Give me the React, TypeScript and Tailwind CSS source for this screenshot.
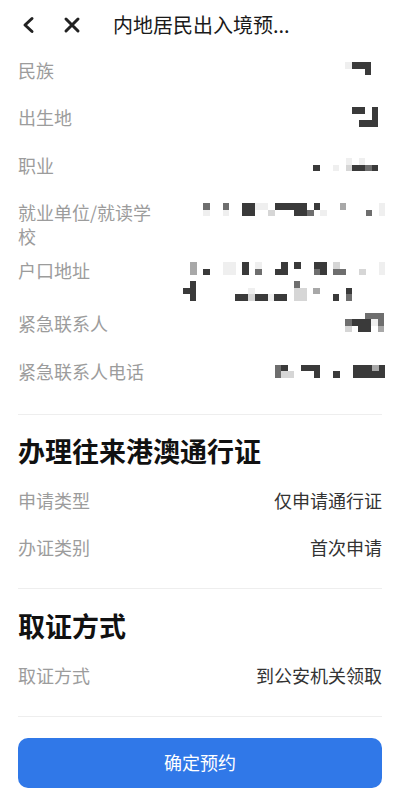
import React from "react";

const shade: Record<string, string> = {
  " ": "bg-transparent",
  "1": "bg-[#efefef]",
  "2": "bg-[#d6d6d6]",
  "3": "bg-[#a8a8a8]",
  "4": "bg-[#6e6e6e]",
  "5": "bg-[#3a3a3a]",
};

function Mosaic({ rows, className = "" }: { rows: string[]; className?: string }) {
  return (
    <div className={`flex flex-col shrink-0 ${className}`}>
      {rows.map((r, i) => (
        <div key={i} className="flex">
          {[...r].map((c, j) => (
            <div key={j} className={`w-[6.5px] h-[6.5px] ${shade[c]}`} />
          ))}
        </div>
      ))}
    </div>
  );
}

function Row({
  label,
  className = "",
  children,
}: {
  label: string;
  className?: string;
  children?: React.ReactNode;
}) {
  return (
    <div className={`flex justify-between items-start ${className}`}>
      <div className="w-[140px] text-[18px] leading-[24px] text-[#9c9c9c]">{label}</div>
      {children}
    </div>
  );
}

export default function App() {
  return (
    <div
      className="w-[400px] h-[808px] bg-white overflow-hidden"
      style={{ fontFamily: '"Noto Sans CJK SC", "Noto Sans", sans-serif' }}
    >
      {/* Header */}
      <div className="h-[50px] flex items-center">
        <svg className="ml-[21px]" width="14" height="18" viewBox="0 0 14 18" fill="none">
          <path d="M11 2.5 L4 9 L11 15.5" stroke="#222222" strokeWidth="3" strokeLinecap="round" strokeLinejoin="round" />
        </svg>
        <svg className="ml-[28px]" width="18" height="18" viewBox="0 0 18 18" fill="none">
          <path d="M3 3 L15 15 M15 3 L3 15" stroke="#222222" strokeWidth="3" strokeLinecap="round" />
        </svg>
        <div className="ml-[32px] text-[20px] leading-[26px] text-[#1a1a1a]">内地居民出入境预...</div>
      </div>

      <div className="px-[18px] flex flex-col">
        <Row label="民族" className="mt-[8px]">
          <Mosaic className="mt-[4px] mr-[11px]" rows={["1555", "   5"]} />
        </Row>
        <Row label="出生地" className="mt-[23px]">
          <Mosaic className="mt-[2px] mr-[4px]" rows={["55 5", "   5", " 555"]} />
        </Row>
        <Row label="职业" className="mt-[24px]">
          <Mosaic className="mt-[5px] mr-[4px]" rows={["     1 1  ", "5  1 25545"]} />
        </Row>
        <Row label="就业单位/就读学校" className="mt-[23px]">
          <Mosaic
            className="mt-[3px] -mr-[3px]"
            rows={["4  4  5511 55555 5   3     1", "1  1  55  2   554 1      4 1"]}
          />
        </Row>
        <Row label="户口地址" className="mt-[10px]">
          <div className="flex flex-col items-end mt-[4px]">
            <Mosaic
              className="-mr-[3px]"
              rows={["3    11 5 1   5 5  55 2      1", "3 5  11 5 4  55    45 44  2  1"]}
            />
            <Mosaic
              className="mt-[6px] mr-[30px]"
              rows={[
                " 5               4        ",
                "55        1      22 3    5",
                " 5      55255155 22    5 4",
              ]}
            />
          </div>
        </Row>
        <Row label="紧急联系人" className="mt-[10px]">
          <Mosaic className="mt-[2px] -mr-[2px]" rows={["   444", "455514", "2 55 3"]} />
        </Row>
        <Row label="紧急联系人电话" className="mt-[24px]">
          <Mosaic className="mt-[6px] -mr-[3px]" rows={["45  555     55535", "422   5  5  55555"]} />
        </Row>

        <div className="mt-[31px] h-px bg-[#eeeeee]" />

        <div className="mt-[19px] text-[27px] leading-[34px] font-bold text-[#111111]">办理往来港澳通行证</div>
        <Row label="申请类型" className="mt-[20px]">
          <div className="text-[18px] leading-[24px] text-[#333333]">仅申请通行证</div>
        </Row>
        <Row label="办证类别" className="mt-[23px]">
          <div className="text-[18px] leading-[24px] text-[#333333]">首次申请</div>
        </Row>

        <div className="mt-[29px] h-px bg-[#eeeeee]" />

        <div className="mt-[20px] text-[27px] leading-[34px] font-bold text-[#111111]">取证方式</div>
        <Row label="取证方式" className="mt-[20px]">
          <div className="text-[18px] leading-[24px] text-[#333333]">到公安机关领取</div>
        </Row>

        <div className="mt-[29px] h-px bg-[#eeeeee]" />

        <button className="mt-[21px] h-[50px] w-full rounded-[10px] bg-[#3078e8] text-white text-[18px] flex items-center justify-center">
          确定预约
        </button>
      </div>
    </div>
  );
}
